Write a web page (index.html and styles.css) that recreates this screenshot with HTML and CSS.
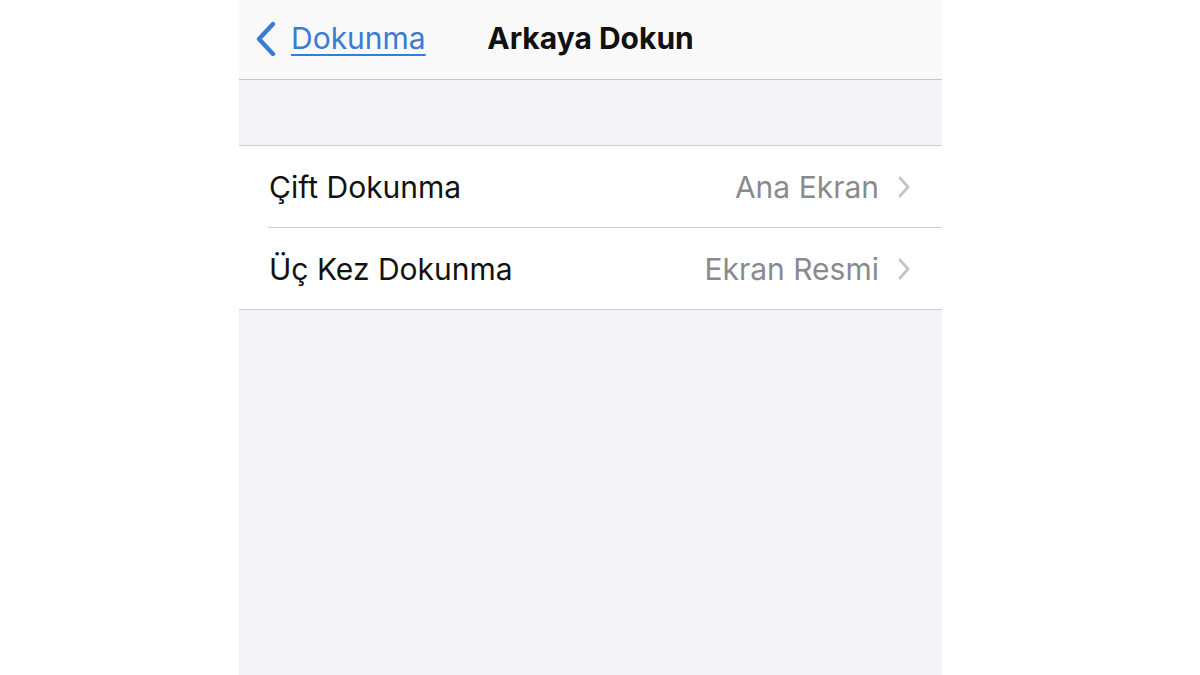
FILE: index.html
```html
<!DOCTYPE html>
<html lang="tr">
<head>
    <meta charset="UTF-8">
    <meta name="viewport" content="width=device-width, initial-scale=1.0">
    <link rel="stylesheet" href="styles.css">
    <title>Arkaya Dokun</title>
</head>
<body>
    <div class="screen">
        <div class="nav-bar">
            <a class="back-link" href="#">
                <svg class="back-chevron" width="22" height="36" viewBox="0 0 22 36">
                    <path d="M18 3 L4 18 L18 33" fill="none" stroke="currentColor" stroke-width="4.4" stroke-linecap="round" stroke-linejoin="round"/>
                </svg>
                <span class="back-text">Dokunma</span>
            </a>
            <div class="nav-title">Arkaya Dokun</div>
            <div></div>
        </div>

        <div class="group-gap"></div>

        <ul class="settings-list">
            <li class="settings-row">
                <span class="row-label">Çift Dokunma</span>
                <span class="row-value">Ana Ekran</span>
                <svg class="row-chevron" width="14" height="24" viewBox="0 0 14 24">
                    <path d="M3 3 L11 12 L3 21" fill="none" stroke="currentColor" stroke-width="2.8" stroke-linecap="round" stroke-linejoin="round"/>
                </svg>
            </li>
            <li class="settings-row">
                <span class="row-label">Üç Kez Dokunma</span>
                <span class="row-value">Ekran Resmi</span>
                <svg class="row-chevron" width="14" height="24" viewBox="0 0 14 24">
                    <path d="M3 3 L11 12 L3 21" fill="none" stroke="currentColor" stroke-width="2.8" stroke-linecap="round" stroke-linejoin="round"/>
                </svg>
            </li>
        </ul>
    </div>
</body>
</html>
```

FILE: styles.css
```css
body {
    margin: 0;
    background-color: #ffffff;
    font-family: Inter, "Open Sans", sans-serif;
}

.screen {
    width: 703px;
    height: 675px;
    margin-left: 239px;
    background-color: #f2f2f7;
    overflow: hidden;
}

.nav-bar {
    display: grid;
    grid-template-columns: 1fr auto 1fr;
    align-items: center;
    height: 76px;
    padding-bottom: 3px;
    background-color: #f9f9f9;
    border-bottom: 1px solid #c6c6c8;
}

.back-link {
    display: flex;
    align-items: center;
    gap: 14px;
    padding-left: 16px;
    color: #3a7bd5;
    text-decoration: none;
}

.back-chevron {
    margin-top: 1px;
}

.back-text {
    font-size: 30px;
    text-decoration: underline;
    text-decoration-thickness: 2px;
    text-underline-offset: 5px;
}

.nav-title {
    font-size: 30px;
    font-weight: 700;
    color: #111111;
}

.group-gap {
    height: 65px;
}

.settings-list {
    list-style: none;
    margin: 0;
    padding: 0;
    background-color: #ffffff;
    border-top: 1px solid #cfcfd3;
    border-bottom: 1px solid #cfcfd3;
}

.settings-row {
    display: flex;
    align-items: center;
    height: 81px;
    margin-left: 29px;
    padding-left: 1px;
    padding-right: 31px;
    font-size: 30px;
}

.settings-row + .settings-row {
    border-top: 1px solid #cfcfd3;
}

.row-label {
    flex: 1;
    color: #111111;
}

.row-value {
    color: #8a8a8e;
    margin-right: 18px;
}

.row-chevron {
    color: #c4c4c7;
}
```
